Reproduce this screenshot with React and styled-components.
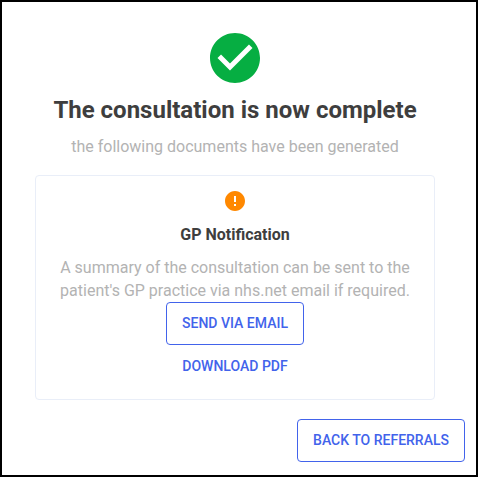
import styled, { createGlobalStyle } from "styled-components";
import { MdCheckCircle, MdError } from "react-icons/md";

export default function App() {
  return (
    <>
      <GlobalStyle />
      <Dialog>
        <Content>
          <SuccessIcon />
          <Title>The consultation is now complete</Title>
          <Subtitle>the following documents have been generated</Subtitle>

          <DocumentCard>
            <WarningIcon />
            <DocumentTitle>GP Notification</DocumentTitle>
            <DocumentText>
              A summary of the consultation can be sent to the patient's GP practice via nhs.net email if required.
            </DocumentText>
            <Button type="button" $outlined>
              SEND VIA EMAIL
            </Button>
            <Button type="button">DOWNLOAD PDF</Button>
          </DocumentCard>
        </Content>

        <Footer>
          <Button type="button" $outlined>
            BACK TO REFERRALS
          </Button>
        </Footer>
      </Dialog>
    </>
  );
}

const GlobalStyle = createGlobalStyle`
  * {
    box-sizing: border-box;
  }

  body {
    margin: 0;
    background: #fff;
    font-family: Roboto, sans-serif;
  }
`;

const Dialog = styled.div`
  display: flex;
  flex-direction: column;
  width: 478px;
  height: 477px;
  border: 2px solid #000;
  background: #fff;
`;

const Content = styled.div`
  display: flex;
  flex-direction: column;
  align-items: center;
  width: 466px;
  padding-top: 26px;
`;

const SuccessIcon = styled(MdCheckCircle)`
  width: 60px;
  height: 60px;
  color: #06ae42;
`;

const Title = styled.h1`
  margin: 7px 0 0;
  font-size: 24px;
  font-weight: 700;
  line-height: 30px;
  white-space: nowrap;
  color: #3e3e3e;
`;

const Subtitle = styled.p`
  margin: 10px 0 0;
  font-size: 16px;
  line-height: 23px;
  color: #b3b3b3;
`;

const DocumentCard = styled.section`
  display: flex;
  flex-direction: column;
  align-items: center;
  width: 400px;
  height: 225px;
  margin-top: 17px;
  padding-top: 13px;
  border: 1px solid #e9eef8;
  border-radius: 4px;
`;

const WarningIcon = styled(MdError)`
  width: 24px;
  height: 24px;
  color: #ff8800;
`;

const DocumentTitle = styled.h2`
  margin: 10px 0 0;
  font-size: 16px;
  font-weight: 700;
  line-height: 23px;
  color: #3e3e3e;
`;

const DocumentText = styled.p`
  width: 366px;
  margin: 10px 0 0;
  font-size: 16px;
  line-height: 23px;
  text-align: center;
  color: #b3b3b3;
`;

const Button = styled.button`
  height: 43px;
  padding: 0 15px 2px;
  border: 1px solid ${({ $outlined }) => ($outlined ? "#4263eb" : "transparent")};
  border-radius: 4px;
  background: transparent;
  font-family: inherit;
  font-size: 14px;
  font-weight: 500;
  white-space: nowrap;
  color: #4263eb;
  cursor: pointer;
`;

const Footer = styled.div`
  display: flex;
  justify-content: flex-end;
  margin-top: 19px;
  padding-right: 11px;
`;
